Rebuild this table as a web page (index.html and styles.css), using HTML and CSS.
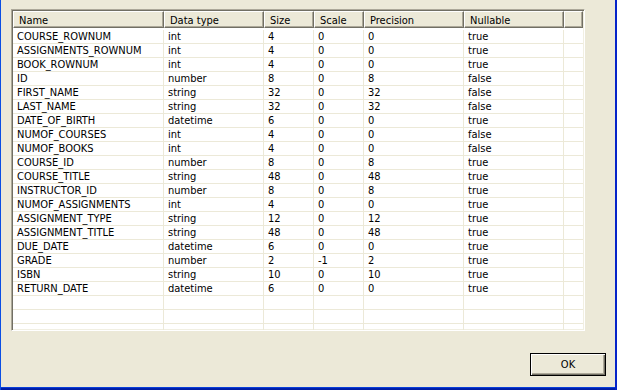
FILE: index.html
```html
<!DOCTYPE html>
<html>
<head>
<meta charset="utf-8">
<link rel="stylesheet" href="styles.css">
</head>
<body>
<div class="window">
  <div class="content">
    <div class="listview">
      <div class="header">
        <div class="hcell c1">Name</div>
        <div class="hcell c2">Data type</div>
        <div class="hcell c3">Size</div>
        <div class="hcell c4">Scale</div>
        <div class="hcell c5">Precision</div>
        <div class="hcell c6">Nullable</div>
        <div class="hcell c7"></div>
        <div class="hrest"></div>
      </div>
      <div class="rows">
        <div class="row"><div class="cell c1">COURSE_ROWNUM</div><div class="cell c2">int</div><div class="cell c3">4</div><div class="cell c4">0</div><div class="cell c5">0</div><div class="cell c6">true</div><div class="cell c7"></div></div>
        <div class="row"><div class="cell c1">ASSIGNMENTS_ROWNUM</div><div class="cell c2">int</div><div class="cell c3">4</div><div class="cell c4">0</div><div class="cell c5">0</div><div class="cell c6">true</div><div class="cell c7"></div></div>
        <div class="row"><div class="cell c1">BOOK_ROWNUM</div><div class="cell c2">int</div><div class="cell c3">4</div><div class="cell c4">0</div><div class="cell c5">0</div><div class="cell c6">true</div><div class="cell c7"></div></div>
        <div class="row"><div class="cell c1">ID</div><div class="cell c2">number</div><div class="cell c3">8</div><div class="cell c4">0</div><div class="cell c5">8</div><div class="cell c6">false</div><div class="cell c7"></div></div>
        <div class="row"><div class="cell c1">FIRST_NAME</div><div class="cell c2">string</div><div class="cell c3">32</div><div class="cell c4">0</div><div class="cell c5">32</div><div class="cell c6">false</div><div class="cell c7"></div></div>
        <div class="row"><div class="cell c1">LAST_NAME</div><div class="cell c2">string</div><div class="cell c3">32</div><div class="cell c4">0</div><div class="cell c5">32</div><div class="cell c6">false</div><div class="cell c7"></div></div>
        <div class="row"><div class="cell c1">DATE_OF_BIRTH</div><div class="cell c2">datetime</div><div class="cell c3">6</div><div class="cell c4">0</div><div class="cell c5">0</div><div class="cell c6">true</div><div class="cell c7"></div></div>
        <div class="row"><div class="cell c1">NUMOF_COURSES</div><div class="cell c2">int</div><div class="cell c3">4</div><div class="cell c4">0</div><div class="cell c5">0</div><div class="cell c6">false</div><div class="cell c7"></div></div>
        <div class="row"><div class="cell c1">NUMOF_BOOKS</div><div class="cell c2">int</div><div class="cell c3">4</div><div class="cell c4">0</div><div class="cell c5">0</div><div class="cell c6">false</div><div class="cell c7"></div></div>
        <div class="row"><div class="cell c1">COURSE_ID</div><div class="cell c2">number</div><div class="cell c3">8</div><div class="cell c4">0</div><div class="cell c5">8</div><div class="cell c6">true</div><div class="cell c7"></div></div>
        <div class="row"><div class="cell c1">COURSE_TITLE</div><div class="cell c2">string</div><div class="cell c3">48</div><div class="cell c4">0</div><div class="cell c5">48</div><div class="cell c6">true</div><div class="cell c7"></div></div>
        <div class="row"><div class="cell c1">INSTRUCTOR_ID</div><div class="cell c2">number</div><div class="cell c3">8</div><div class="cell c4">0</div><div class="cell c5">8</div><div class="cell c6">true</div><div class="cell c7"></div></div>
        <div class="row"><div class="cell c1">NUMOF_ASSIGNMENTS</div><div class="cell c2">int</div><div class="cell c3">4</div><div class="cell c4">0</div><div class="cell c5">0</div><div class="cell c6">true</div><div class="cell c7"></div></div>
        <div class="row"><div class="cell c1">ASSIGNMENT_TYPE</div><div class="cell c2">string</div><div class="cell c3">12</div><div class="cell c4">0</div><div class="cell c5">12</div><div class="cell c6">true</div><div class="cell c7"></div></div>
        <div class="row"><div class="cell c1">ASSIGNMENT_TITLE</div><div class="cell c2">string</div><div class="cell c3">48</div><div class="cell c4">0</div><div class="cell c5">48</div><div class="cell c6">true</div><div class="cell c7"></div></div>
        <div class="row"><div class="cell c1">DUE_DATE</div><div class="cell c2">datetime</div><div class="cell c3">6</div><div class="cell c4">0</div><div class="cell c5">0</div><div class="cell c6">true</div><div class="cell c7"></div></div>
        <div class="row"><div class="cell c1">GRADE</div><div class="cell c2">number</div><div class="cell c3">2</div><div class="cell c4">-1</div><div class="cell c5">2</div><div class="cell c6">true</div><div class="cell c7"></div></div>
        <div class="row"><div class="cell c1">ISBN</div><div class="cell c2">string</div><div class="cell c3">10</div><div class="cell c4">0</div><div class="cell c5">10</div><div class="cell c6">true</div><div class="cell c7"></div></div>
        <div class="row"><div class="cell c1">RETURN_DATE</div><div class="cell c2">datetime</div><div class="cell c3">6</div><div class="cell c4">0</div><div class="cell c5">0</div><div class="cell c6">true</div><div class="cell c7"></div></div>
        <div class="row"><div class="cell c1"></div><div class="cell c2"></div><div class="cell c3"></div><div class="cell c4"></div><div class="cell c5"></div><div class="cell c6"></div><div class="cell c7"></div></div>
        <div class="row"><div class="cell c1"></div><div class="cell c2"></div><div class="cell c3"></div><div class="cell c4"></div><div class="cell c5"></div><div class="cell c6"></div><div class="cell c7"></div></div>
        <div class="row"><div class="cell c1"></div><div class="cell c2"></div><div class="cell c3"></div><div class="cell c4"></div><div class="cell c5"></div><div class="cell c6"></div><div class="cell c7"></div></div>
      </div>
    </div>
    <div class="footer">
      <button class="btn">OK</button>
    </div>
  </div>
  <div class="frame-bottom"></div>
</div>
</body>
</html>
```

FILE: styles.css
```css
html, body {
  margin: 0;
  padding: 0;
  width: 617px;
  height: 390px;
  overflow: hidden;
  background: #ece9d8;
}

.window {
  width: 617px;
  height: 390px;
  box-sizing: border-box;
  border-left: 1px solid #0b4fe4;
  border-right: 2px solid #0524c9;
  display: flex;
  flex-direction: column;
  background: #ece9d8;
  font-family: "DejaVu Sans Condensed", "Liberation Sans", sans-serif;
  font-size: 11px;
  color: #000;
}

.content {
  flex: 1;
  display: flex;
  flex-direction: column;
  padding: 9px 0 0 10px;
}

.frame-bottom {
  height: 3px;
  background: linear-gradient(#0a3fd8 0, #0a3fd8 1px, #0021b0 1px, #001b9e 3px);
}

.listview {
  width: 574px;
  height: 322px;
  box-sizing: border-box;
  border-top: 1px solid #aca899;
  border-left: 1px solid #aca899;
  border-bottom: 1px solid #ffffff;
  border-right: 1px solid #ffffff;
  box-shadow: inset 1px 1px 0 #716f64, inset -1px -1px 0 #f1efe2;
  padding: 1px;
  background: #fff;
  overflow: hidden;
  display: flex;
  flex-direction: column;
}

.header {
  display: flex;
  height: 17px;
  flex: none;
  background: #ece9d8;
}

.hcell {
  box-sizing: border-box;
  height: 17px;
  padding: 2px 0 0 5px;
  line-height: 13px;
  white-space: nowrap;
  border-top: 1px solid #ffffff;
  border-left: 1px solid #ffffff;
  border-right: 1px solid #716f64;
  border-bottom: 1px solid #716f64;
  box-shadow: inset -1px -1px 0 #aca899;
}

.hrest {
  flex: 1;
  box-sizing: border-box;
  height: 17px;
  border-top: 1px solid #ffffff;
  border-bottom: 1px solid #716f64;
  box-shadow: inset 0 -1px 0 #aca899;
}

.c1 { width: 151px; }
.c2 { width: 100px; }
.c3 { width: 50px; }
.c4 { width: 50px; }
.c5 { width: 100px; }
.c6 { width: 100px; }
.c7 { width: 19px; }

.rows {
  padding-top: 2px;
}

.row {
  display: flex;
  height: 14px;
}

.cell {
  box-sizing: border-box;
  height: 14px;
  padding-left: 4px;
  line-height: 13px;
  white-space: nowrap;
  overflow: hidden;
  border-right: 1px solid #ece9d8;
  border-bottom: 1px solid #ece9d8;
}

.cell.c7 {
  border-right: none;
}

.footer {
  display: flex;
  justify-content: flex-end;
  padding: 22px 9px 0 0;
}

.btn {
  width: 76px;
  height: 23px;
  box-sizing: border-box;
  margin: 0;
  padding: 0;
  background: #ece9d8;
  border: 1px solid #000;
  box-shadow: inset 1px 1px 0 #ffffff, inset -1px -1px 0 #716f64, inset -2px -2px 0 #aca899;
  font-family: "DejaVu Sans Condensed", "Liberation Sans", sans-serif;
  font-size: 11px;
  color: #000;
  line-height: 20px;
}
```
